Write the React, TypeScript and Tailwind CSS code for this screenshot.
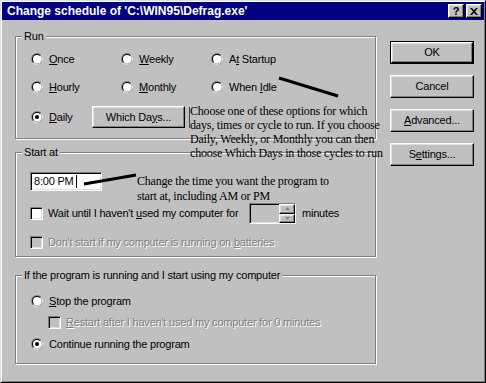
import type { ReactNode } from "react";

const raised =
  "bg-[#c0c0c0] border border-t-white border-l-white border-r-black border-b-black shadow-[inset_-1px_-1px_0_#808080,inset_1px_1px_0_#dfdfdf]";
const sunken =
  "border border-t-[#808080] border-l-[#808080] border-r-white border-b-white shadow-[inset_1px_1px_0_#000,inset_-1px_-1px_0_#dfdfdf]";
const disabledText = "text-[#808080] [text-shadow:1px_1px_0_#fff]";

function Radio({ checked = false }: { checked?: boolean }) {
  return (
    <svg width="12" height="12" viewBox="0 0 12 12" className="shrink-0">
      <circle cx="6" cy="6" r="6" fill="#808080" />
      <path d="M10.24 1.76A6 6 0 0 1 1.76 10.24Z" fill="#fff" />
      <circle cx="6" cy="6" r="5" fill="#000" />
      <path d="M9.54 2.46A5 5 0 0 1 2.46 9.54Z" fill="#dfdfdf" />
      <circle cx="6" cy="6" r="4" fill="#fff" />
      {checked && <circle cx="6" cy="6" r="2" fill="#000" />}
    </svg>
  );
}

function Check({ disabled = false }: { disabled?: boolean }) {
  return (
    <div
      className={`w-[13px] h-[13px] shrink-0 ${sunken} ${disabled ? "bg-[#c0c0c0]" : "bg-white"}`}
    />
  );
}

function Option({ checked, children }: { checked?: boolean; children: ReactNode }) {
  return (
    <div className="flex items-center gap-[6px] h-[20px]">
      <Radio checked={checked} />
      <span>{children}</span>
    </div>
  );
}

function Group({ label, className, children }: { label: string; className: string; children: ReactNode }) {
  return (
    <div
      className={`relative border border-[#808080] shadow-[1px_1px_0_#fff,inset_1px_1px_0_#fff] ${className}`}
    >
      <span className="absolute left-[6px] top-[-8px] bg-[#c0c0c0] px-[2px] leading-[14px]">{label}</span>
      {children}
    </div>
  );
}

function PushButton({ children, className = "" }: { children: ReactNode; className?: string }) {
  return (
    <div className={`h-[23px] w-[84px] flex items-center justify-center ${raised} ${className}`}>
      {children}
    </div>
  );
}

export default function App() {
  return (
    <div className="relative w-[486px] h-[383px] bg-[#c0c0c0] p-[1px] border border-t-[#dfdfdf] border-l-[#dfdfdf] border-r-black border-b-black shadow-[inset_1px_1px_0_#fff,inset_-1px_-1px_0_#808080] font-['Liberation_Sans',Arial,sans-serif] text-[11px] tracking-[-0.2px] text-black leading-none overflow-hidden">
      {/* title bar */}
      <div className="h-[18px] bg-[#000080] flex items-center pl-[5px] pr-[2px]">
        <span className="text-white font-bold text-[12px] tracking-normal">
          {"Change schedule of 'C:\\WIN95\\Defrag.exe'"}
        </span>
        <div className={`ml-auto w-[16px] h-[14px] flex items-center justify-center font-bold text-[11px] ${raised}`}>
          ?
        </div>
        <div className={`ml-[2px] w-[16px] h-[14px] flex items-center justify-center ${raised}`}>
          <svg width="8" height="7" viewBox="0 0 8 7">
            <path d="M0 0h2l2 2.2L6 0h2L5 3.5 8 7H6L4 4.8 2 7H0l3-3.5Z" fill="#000" />
          </svg>
        </div>
      </div>

      <div className="flex pl-[13px]">
        <div className="w-[362px] mt-[16px]">
          <Group label="Run" className="w-[361px] h-[103px] pt-[12px] pl-[15px]">
            <div className="grid grid-cols-[90px_90px_1fr] gap-y-[8px]">
              <Option><u>O</u>nce</Option>
              <Option><u>W</u>eekly</Option>
              <Option>A<u>t</u> Startup</Option>
              <Option><u>H</u>ourly</Option>
              <Option><u>M</u>onthly</Option>
              <Option>When <u>I</u>dle</Option>
            </div>
            <div className="flex items-center mt-[9px]">
              <div className="w-[61px] flex items-center gap-[6px]">
                <Radio checked />
                <span><u>D</u>aily</span>
              </div>
              <div className={`h-[22px] w-[93px] flex items-center justify-center ${raised}`}>
                Which Da<u>y</u>s...
              </div>
            </div>
          </Group>

          <Group label="Start at" className="w-[361px] h-[105px] mt-[13px] pt-[19px] pl-[14px]">
            <div className={`w-[72px] h-[19px] bg-white flex items-center pl-[3px] ${sunken}`}>
              <span>8:00 PM</span>
              <span className="ml-[2px] w-[1px] h-[13px] bg-black" />
            </div>
            <div className="flex items-center h-[21px] mt-[12px]">
              <div className="w-[219px] flex items-center gap-[5px]">
                <Check />
                <span>Wait until I haven't <u>u</u>sed my computer for</span>
              </div>
              <div className={`w-[47px] h-[21px] flex ${sunken}`}>
                <div className="flex-1" />
                <div className="w-[16px] flex flex-col">
                  <div className={`flex-1 flex items-center justify-center ${raised}`}>
                    <svg width="5" height="3" viewBox="0 0 5 3">
                      <path d="M2.5 0 5 3H0Z" fill="#808080" />
                    </svg>
                  </div>
                  <div className={`flex-1 flex items-center justify-center ${raised}`}>
                    <svg width="5" height="3" viewBox="0 0 5 3">
                      <path d="M0 0h5L2.5 3Z" fill="#808080" />
                    </svg>
                  </div>
                </div>
              </div>
              <span className="ml-[6px]">minutes</span>
            </div>
            <div className="flex items-center h-[20px] mt-[8px] gap-[5px]">
              <Check disabled />
              <span className={disabledText}>
                Don't start if my computer is running on <u>b</u>atteries
              </span>
            </div>
          </Group>

          <Group
            label="If the program is running and I start using my computer"
            className="w-[361px] h-[89px] mt-[18px] pt-[15px] pl-[15px]"
          >
            <Option><u>S</u>top the program</Option>
            <div className="flex items-center h-[20px] mt-[1px] ml-[17px] gap-[5px]">
              <Check disabled />
              <span className={disabledText}>
                <u>R</u>estart after I haven't used my computer for 0 minutes
              </span>
            </div>
            <div className="mt-[2px]">
              <Option checked>Continue running the program</Option>
            </div>
          </Group>
        </div>

        <div className="ml-[13px] mt-[21px] flex flex-col gap-[11px]">
          <div className="border border-black w-[84px] h-[23px]">
            <div className={`h-full w-full flex items-center justify-center ${raised}`}>OK</div>
          </div>
          <PushButton>Cancel</PushButton>
          <PushButton><span><u>A</u>dvanced...</span></PushButton>
          <PushButton><span>S<u>e</u>ttings...</span></PushButton>
        </div>
      </div>

      {/* annotations pasted over the dialog */}
      <div className="absolute left-[188px] top-[106px] w-[1px] h-[21px] bg-[#404040]" />
      <div className="absolute left-[189px] top-[103px] font-['Liberation_Serif',serif] text-[12px] leading-[14px] whitespace-nowrap">
        <div>Choose one of these options for which</div>
        <div>days, times or cycle to run. If you choose</div>
        <div>Daily, Weekly, or Monthly you can then</div>
        <div>choose Which Days in those cycles to run</div>
      </div>
      <div className="absolute left-[136px] top-[173px] font-['Liberation_Serif',serif] text-[12px] leading-[15px] whitespace-nowrap">
        <div>Change the time you want the program to</div>
        <div>start at, including AM or PM</div>
      </div>
      <svg className="absolute inset-0 pointer-events-none" width="486" height="383">
        <line x1="278" y1="77" x2="337" y2="95" stroke="#000" strokeWidth="3" />
        <line x1="83" y1="183" x2="135" y2="174" stroke="#000" strokeWidth="3" />
      </svg>
    </div>
  );
}
